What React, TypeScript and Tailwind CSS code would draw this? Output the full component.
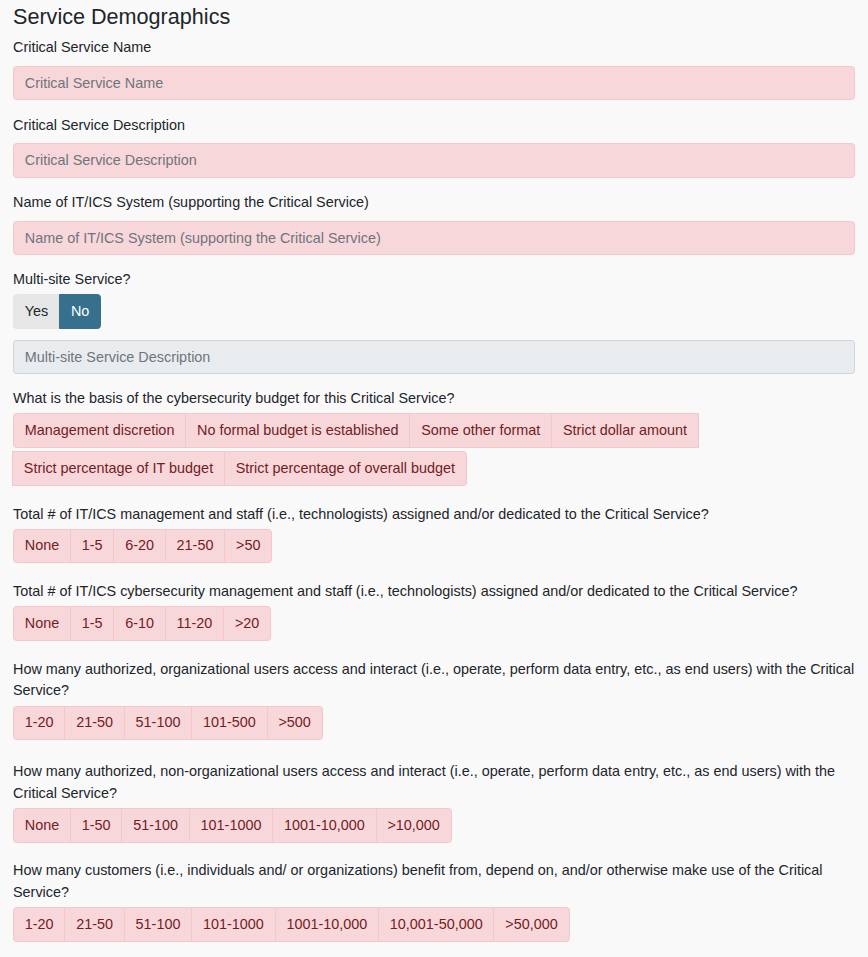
import clsx from 'clsx';

// ---------------------------------------------------------------------------
// Service Demographics form (static recreation)
// ---------------------------------------------------------------------------

type ChoiceGroup = {
  label: string;
  options: string[];
  extraTop?: boolean;
};

const textFields = [
  'Critical Service Name',
  'Critical Service Description',
  'Name of IT/ICS System (supporting the Critical Service)',
];

const choiceGroups: ChoiceGroup[] = [
  {
    label: 'What is the basis of the cybersecurity budget for this Critical Service?',
    options: [
      'Management discretion',
      'No formal budget is established',
      'Some other format',
      'Strict dollar amount',
      'Strict percentage of IT budget',
      'Strict percentage of overall budget',
    ],
  },
  {
    label:
      'Total # of IT/ICS management and staff (i.e., technologists) assigned and/or dedicated to the Critical Service?',
    options: ['None', '1-5', '6-20', '21-50', '>50'],
  },
  {
    label:
      'Total # of IT/ICS cybersecurity management and staff (i.e., technologists) assigned and/or dedicated to the Critical Service?',
    options: ['None', '1-5', '6-10', '11-20', '>20'],
  },
  {
    label:
      'How many authorized, organizational users access and interact (i.e., operate, perform data entry, etc., as end users) with the Critical Service?',
    options: ['1-20', '21-50', '51-100', '101-500', '>500'],
  },
  {
    label:
      'How many authorized, non-organizational users access and interact (i.e., operate, perform data entry, etc., as end users) with the Critical Service?',
    options: ['None', '1-50', '51-100', '101-1000', '1001-10,000', '>10,000'],
    extraTop: true,
  },
  {
    label:
      'How many customers (i.e., individuals and/ or organizations) benefit from, depend on, and/or otherwise make use of the Critical Service?',
    options: ['1-20', '21-50', '51-100', '101-1000', '1001-10,000', '10,001-50,000', '>50,000'],
  },
];

function ChoiceButtons({ options }: { options: string[] }) {
  return (
    <div className="flex flex-wrap">
      {options.map((opt, i) => (
        <button
          key={opt}
          type="button"
          className={clsx(
            'mb-[3.6px] border border-[#f5c6cb] bg-[#f8d7da] px-[10.8px] py-[5.4px] leading-[21.6px] text-[#721c24]',
            i > 0 && '-ml-px',
            i === 0 && 'rounded-l-[3.6px]',
            i === options.length - 1 && 'rounded-r-[3.6px]',
          )}
        >
          {opt}
        </button>
      ))}
    </div>
  );
}

export default function App() {
  return (
    <div
      className="min-h-screen bg-[#f9f9f9] px-[13px] pt-[4px] text-[14.4px] leading-[21.6px] text-[#212529]"
      style={{ fontFamily: '"Liberation Sans", Arial, sans-serif' }}
    >
      <h4 className="mb-[7.2px] text-[21.6px] leading-[26px] text-[#212529]">
        Service Demographics
      </h4>

      {textFields.map((name) => (
        <div key={name} className="mb-[14.4px]">
          <label className="mb-[7.2px] block">{name}</label>
          <input
            type="text"
            placeholder={name}
            className="block h-[34.2px] w-full rounded-[3.6px] border border-[#f5c6cb] bg-[#f8d7da] px-[10.8px] text-[#495057] outline-none placeholder:text-[#6c757d]"
          />
        </div>
      ))}

      <div className="mb-[14.4px]">
        <div className="mb-[3.6px]">Multi-site Service?</div>
        <div className="flex">
          <button
            type="button"
            className="rounded-l-[3.6px] border border-[#e6e6e6] bg-[#e6e6e6] px-[10.8px] py-[5.4px] leading-[21.6px] text-[#212529]"
          >
            Yes
          </button>
          <button
            type="button"
            className="-ml-px rounded-r-[3.6px] border border-[#36708d] bg-[#36708d] px-[10.8px] py-[5.4px] leading-[21.6px] text-white"
          >
            No
          </button>
        </div>
        <input
          type="text"
          disabled
          placeholder="Multi-site Service Description"
          className="mt-[10.8px] block h-[34.2px] w-full rounded-[3.6px] border border-[#ced4da] bg-[#e9ecef] px-[10.8px] outline-none placeholder:text-[#6c757d]"
        />
      </div>

      {choiceGroups.map((g) => (
        <div key={g.label} className={clsx('mb-[14.4px]', g.extraTop && 'pt-[3.4px]')}>
          <div className="mb-[3.6px]">{g.label}</div>
          <ChoiceButtons options={g.options} />
        </div>
      ))}
    </div>
  );
}
